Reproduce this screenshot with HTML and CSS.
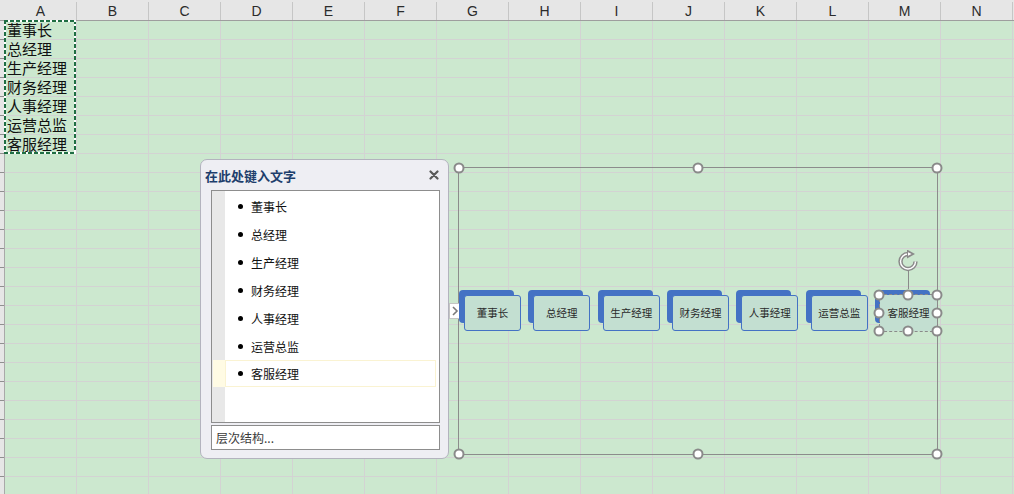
FILE: index.html
```html
<!DOCTYPE html>
<html lang="zh-CN">
<head>
<meta charset="utf-8">
<title>SmartArt</title>
<link rel="stylesheet" href="styles.css">
</head>
<body>
<div class="sheet">
  <div class="head-row">
    <div class="corner"></div>
    <div class="colhead">A</div>
    <div class="colhead">B</div>
    <div class="colhead">C</div>
    <div class="colhead">D</div>
    <div class="colhead">E</div>
    <div class="colhead">F</div>
    <div class="colhead">G</div>
    <div class="colhead">H</div>
    <div class="colhead">I</div>
    <div class="colhead">J</div>
    <div class="colhead">K</div>
    <div class="colhead">L</div>
    <div class="colhead">M</div>
    <div class="colhead">N</div>
  </div>
  <div class="body">
    <div class="rowstrip"></div>
    <div class="cells">
      <div class="col-a">
        <div class="cell">董事长</div>
        <div class="cell">总经理</div>
        <div class="cell">生产经理</div>
        <div class="cell">财务经理</div>
        <div class="cell">人事经理</div>
        <div class="cell">运营总监</div>
        <div class="cell">客服经理</div>
      </div>
      <div class="ants"></div>
    </div>
  </div>

  <div class="pane">
    <div class="pane-title">
      <span>在此处键入文字</span>
      <svg class="close" width="10" height="10" viewBox="0 0 10 10"><path d="M1.5 1.5 L8.5 8.5 M8.5 1.5 L1.5 8.5" stroke="#5a5a5a" stroke-width="2.2" stroke-linecap="round"/></svg>
    </div>
    <div class="list-box">
      <div class="item"><span class="gut"></span><span class="txt"><i class="dot"></i>董事长</span></div>
      <div class="item"><span class="gut"></span><span class="txt"><i class="dot"></i>总经理</span></div>
      <div class="item"><span class="gut"></span><span class="txt"><i class="dot"></i>生产经理</span></div>
      <div class="item"><span class="gut"></span><span class="txt"><i class="dot"></i>财务经理</span></div>
      <div class="item"><span class="gut"></span><span class="txt"><i class="dot"></i>人事经理</span></div>
      <div class="item"><span class="gut"></span><span class="txt"><i class="dot"></i>运营总监</span></div>
      <div class="item active"><span class="gut"></span><span class="txt"><i class="dot"></i>客服经理</span></div>
    </div>
    <div class="hier">层次结构...</div>
  </div>

  <div class="smartart">
    <div class="tab"><svg width="8" height="12" viewBox="0 0 8 12"><path d="M2 2 L6 6 L2 10" fill="none" stroke="#7a7a7a" stroke-width="1.6"/></svg></div>
    <div class="node"><div class="front">董事长</div></div>
    <div class="node"><div class="front">总经理</div></div>
    <div class="node"><div class="front">生产经理</div></div>
    <div class="node"><div class="front">财务经理</div></div>
    <div class="node"><div class="front">人事经理</div></div>
    <div class="node"><div class="front">运营总监</div></div>
    <div class="node selected">
      <div class="front">客服经理</div>
      <div class="sel">
        <span class="h tl"></span><span class="h tc"></span><span class="h tr"></span>
        <span class="h ml"></span><span class="h mr"></span>
        <span class="h bl"></span><span class="h bc"></span><span class="h br"></span>
      </div>
      <div class="rot-line"></div>
      <svg class="rot" width="26" height="22" viewBox="0 0 26 22">
        <path d="M18.5 11.5 A7.5 7.5 0 1 1 11 4" fill="none" stroke="#8a8a8a" stroke-width="4.4"/>
        <path d="M18.5 11.5 A7.5 7.5 0 1 1 11 4" fill="none" stroke="#ffffff" stroke-width="1.4"/>
        <path d="M10 -0.5 L18 4 L10 8.5 Z" fill="#8a8a8a"/>
        <path d="M11 2.2 L14.6 4 L11 5.8 Z" fill="#ffffff"/>
      </svg>
    </div>
    <span class="h f-tl"></span><span class="h f-tc"></span><span class="h f-tr"></span>
    <span class="h f-bl"></span><span class="h f-bc"></span><span class="h f-br"></span>
  </div>
</div>
</body>
</html>
```
FILE: styles.css
```css
* { box-sizing: border-box; }
html, body { margin: 0; padding: 0; }
body {
  width: 1014px;
  height: 494px;
  overflow: hidden;
  background: #cce8cf;
  font-family: "Noto Sans CJK SC", "Noto Sans", sans-serif;
}
.sheet {
  position: relative;
  width: 1014px;
  height: 494px;
}
.head-row {
  display: flex;
  height: 21px;
  background: #e6e6e6;
  border-bottom: 1px solid #9e9e9e;
}
.corner {
  width: 5px;
  flex: none;
}
.colhead {
  width: 72px;
  flex: none;
  border-right: 1px solid #c6c6c6;
  margin-top: 2px;
  text-align: center;
  font-family: "Liberation Sans", "Noto Sans", sans-serif;
  font-size: 14px;
  line-height: 18px;
  color: #2b2b2b;
}
.body {
  display: flex;
  height: 473px;
}
.rowstrip {
  width: 5px;
  flex: none;
  background-color: #e6e6e6;
  background-image: linear-gradient(to bottom, transparent 18px, #8f8f8f 18px);
  background-size: 100% 19px;
  border-right: 1px solid #a9a9a9;
}
.cells {
  position: relative;
  flex: 1;
  background-color: #cce8cf;
  background-image:
    linear-gradient(to right, transparent 71px, #d3d3d3 71px),
    linear-gradient(to bottom, transparent 18px, #d3d3d3 18px);
  background-size: 72px 100%, 100% 19px;
}
.col-a {
  width: 71px;
}
.cell {
  height: 19px;
  line-height: 18px;
  padding-left: 2px;
  font-size: 15px;
  color: #111;
  white-space: nowrap;
}
.ants {
  position: absolute;
  left: -1px;
  top: -1px;
  width: 72px;
  height: 134px;
  background:
    repeating-linear-gradient(to right, #1f6e43 0 4px, #ffffff 4px 6px) top left / 100% 2px no-repeat,
    repeating-linear-gradient(to right, #1f6e43 0 4px, #ffffff 4px 6px) bottom left / 100% 2px no-repeat,
    repeating-linear-gradient(to bottom, #1f6e43 0 4px, #ffffff 4px 6px) top left / 2px 100% no-repeat,
    repeating-linear-gradient(to bottom, #1f6e43 0 4px, #ffffff 4px 6px) top right / 2px 100% no-repeat;
}

/* text pane */
.pane {
  position: absolute;
  left: 200px;
  top: 159px;
  width: 249px;
  height: 300px;
  background: #eeeef3;
  border: 1px solid #b3b3be;
  border-radius: 7px;
  padding: 0 8px 0 10px;
}
.pane-title {
  height: 30px;
  display: flex;
  align-items: center;
  justify-content: space-between;
  margin-left: -6px;
  padding: 0 1px 0 0;
  font-size: 13px;
  font-weight: bold;
  color: #1e3e6c;
}
.close { display: block; }
.list-box {
  height: 233px;
  border: 1px solid #8d8d8d;
  background: linear-gradient(to right, #e8e8e8 13px, #ffffff 13px);
  padding-top: 1px;
}
.item {
  display: flex;
  height: 28px;
  align-items: stretch;
  font-size: 12px;
  color: #111;
}
.gut {
  width: 13px;
  flex: none;
}
.txt {
  flex: 1;
  display: flex;
  align-items: center;
  padding-left: 13px;
  gap: 8px;
}
.dot {
  width: 5px;
  height: 5px;
  border-radius: 50%;
  background: #000;
}
.item.active { height: 27px; }
.item.active .gut {
  background: #fffbe4;
  margin-left: 1px;
  width: 12px;
}
.item.active .txt {
  border: 1px solid #faf3d2;
  margin-right: 3px;
  padding-left: 12px;
}
.hier {
  margin-top: 2px;
  height: 25px;
  border: 1px solid #8d8d8d;
  background: #fff;
  font-size: 12px;
  color: #3a3a3a;
  line-height: 23px;
  padding-left: 4px;
}

/* smartart */
.smartart {
  position: absolute;
  left: 458px;
  top: 167px;
  width: 480px;
  height: 288px;
  border: 1px solid #8c8c8c;
  display: flex;
  align-items: flex-start;
  gap: 7.33px;
  padding-top: 122px;
}
.tab {
  position: absolute;
  left: -10px;
  top: 135px;
  width: 14px;
  height: 16px;
  background: #fff;
  border: 1px solid #c4c4c4;
  display: flex;
  align-items: center;
  padding-left: 1px;
}
.node {
  position: relative;
  width: 62px;
  height: 41px;
  flex: none;
}
.node::before {
  content: "";
  position: absolute;
  left: 0;
  top: 0;
  width: 55px;
  height: 33px;
  background: #4472c4;
  border-radius: 4px;
}
.front {
  position: relative;
  margin: 5px 0 0 5px;
  width: 57px;
  height: 36px;
  border: 1.5px solid #4472c4;
  border-radius: 3px;
  background: #c3dfd1;
  display: flex;
  align-items: center;
  justify-content: center;
  font-size: 10.5px;
  color: #2a2a2a;
  white-space: nowrap;
  padding-bottom: 2px;
}
.selected .front { border-color: #c3dfd1; }
.sel {
  position: absolute;
  left: 4px;
  top: 4px;
  width: 59px;
  height: 38px;
  border: 1px dashed #8a8a8a;
}
.h {
  position: absolute;
  width: 11px;
  height: 11px;
  border-radius: 50%;
  background: #fff;
  border: 2px solid #8a8a8a;
  transform: translate(-50%, -50%);
}
.sel .tl { left: -0.5px; top: -0.5px; }
.sel .tc { left: 50%; top: -0.5px; }
.sel .tr { left: 100%; top: -0.5px; }
.sel .ml { left: -0.5px; top: 50%; }
.sel .mr { left: 100%; top: 50%; }
.sel .bl { left: -0.5px; top: 100%; }
.sel .bc { left: 50%; top: 100%; }
.sel .br { left: 100%; top: 100%; }
.rot-line {
  position: absolute;
  left: 33px;
  top: -21px;
  width: 1px;
  height: 20px;
  background: #8a8a8a;
}
.rot {
  position: absolute;
  left: 22px;
  top: -40px;
}
.f-tl { left: -0.5px; top: -0.5px; }
.f-tc { left: 50%; top: -0.5px; }
.f-tr { left: 100%; top: -0.5px; }
.f-bl { left: -0.5px; top: 100%; }
.f-bc { left: 50%; top: 100%; }
.f-br { left: 100%; top: 100%; }
```
